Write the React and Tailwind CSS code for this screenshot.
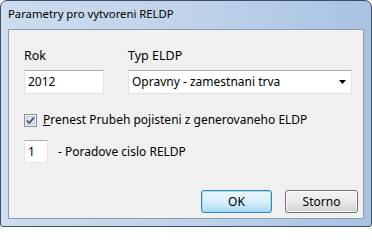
import React from 'react';

const font = { fontFamily: '"Noto Sans", "Liberation Sans", sans-serif' };

// Zaskrtnute policko ve stylu Win7
function CheckBox() {
  return (
    <svg width="13" height="13" viewBox="0 0 13 13" className="shrink-0">
      <rect x="0.5" y="0.5" width="12" height="12" fill="#f4f4f4" stroke="#8e8f8f" />
      <rect x="2.5" y="2.5" width="8" height="8" fill="#dfe6ee" stroke="#c4cbd4" />
      <path d="M3 6.5 L5.3 9 L10 3.5" fill="none" stroke="#2a4f8a" strokeWidth="1.8" />
    </svg>
  );
}

function App() {
  return (
    <div className="w-[372px] h-[227px] bg-white text-[12px] text-black" style={font}>
      <div className="w-full h-full flex flex-col rounded-t-[7px] rounded-b-[3px] border border-[#3d4f66] bg-gradient-to-r from-[#cddcee] via-[#c0d3ea] to-[#a9c2e3]">
        {/* Titulek */}
        <div className="h-[28px] flex items-center pl-[7px] pb-[2px] text-[11.3px] text-black">
          Parametry pro vytvoreni RELDP
        </div>

        {/* Obsah */}
        <div className="mx-[7px] mb-[7px] flex-1 flex flex-col border border-[#8c9db3] bg-[#f0f0f0] pl-[15px] pr-[5px] pt-[18px] pb-[5px]">
          <div className="flex">
            <div className="w-[104px] flex flex-col">
              <div className="h-[16px] leading-[16px] text-[12.5px]">Rok</div>
              <div className="mt-[6px] w-[80px] h-[24px] bg-white border border-[#e2e3ea] border-t-[#abadb3] flex items-center pl-[3px]">
                2012
              </div>
            </div>
            <div className="flex flex-col">
              <div className="h-[16px] leading-[16px] text-[12.5px]">Typ ELDP</div>
              <div className="mt-[6px] w-[224px] h-[24px] bg-white border border-[#e2e3ea] border-t-[#abadb3] flex items-center justify-between pl-[3px] pr-[5px]">
                <span>Opravny - zamestnani trva</span>
                <svg width="7" height="4" viewBox="0 0 7 4">
                  <path d="M0 0 H7 L3.5 4 Z" fill="#000" />
                </svg>
              </div>
            </div>
          </div>

          <div className="mt-[18px] h-[16px] flex items-center gap-[6px]">
            <CheckBox />
            <span>
              <span className="underline">P</span>renest Prubeh pojisteni z generovaneho ELDP
            </span>
          </div>

          <div className="mt-[12px] flex items-center gap-[10px]">
            <div className="w-[24px] h-[23px] bg-white border border-[#e2e3ea] border-t-[#abadb3] flex items-center pl-[3px]">
              1
            </div>
            <span>- Poradove cislo RELDP</span>
          </div>

          <div className="mt-auto flex justify-end gap-[13px]">
            <button className="w-[71px] h-[23px] rounded-[3px] border border-[#3c7fb1] bg-gradient-to-b from-[#eaf6fd] via-[#d9f0fc] to-[#a7d9f5] shadow-[inset_0_0_0_1px_#9be0f5]">
              OK
            </button>
            <button className="w-[73px] h-[23px] rounded-[3px] border border-[#707070] bg-gradient-to-b from-[#f2f2f2] via-[#ebebeb] to-[#cfcfcf] shadow-[inset_0_0_0_1px_#fcfcfc]">
              Storno
            </button>
          </div>
        </div>
      </div>
    </div>
  );
}

export default App;
